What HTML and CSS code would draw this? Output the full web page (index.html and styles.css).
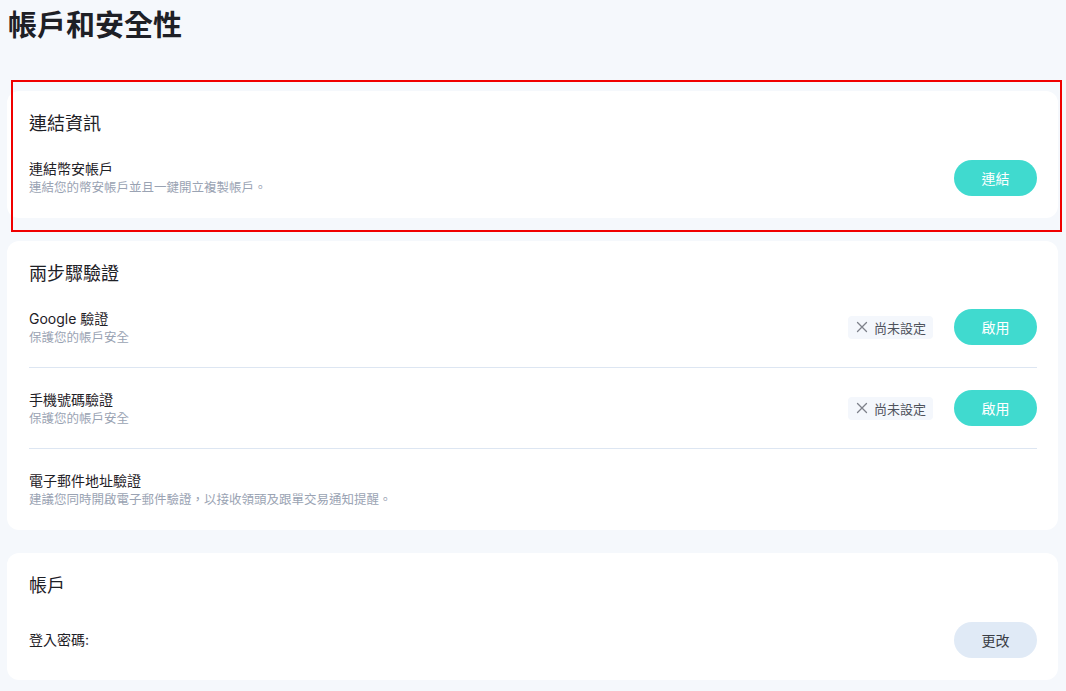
FILE: index.html
```html
<!DOCTYPE html>
<html lang="zh-Hant">
<head>
<meta charset="utf-8">
<title>帳戶和安全性</title>
<link rel="stylesheet" href="styles.css">
</head>
<body>
<div class="page">
  <h1 class="page-title">帳戶和安全性</h1>

  <div class="highlight-wrap">
    <section class="card">
      <h2 class="card-title">連結資訊</h2>
      <div class="row">
        <div class="row-text">
          <div class="row-label">連結幣安帳戶</div>
          <div class="row-desc">連結您的幣安帳戶並且一鍵開立複製帳戶。</div>
        </div>
        <div class="row-actions">
          <button class="btn btn-primary">連結</button>
        </div>
      </div>
    </section>
    <div class="highlight"></div>
  </div>

  <section class="card">
    <h2 class="card-title">兩步驟驗證</h2>
    <div class="row row-divided">
      <div class="row-text">
        <div class="row-label">Google 驗證</div>
        <div class="row-desc">保護您的帳戶安全</div>
      </div>
      <div class="row-actions">
        <span class="tag">
          <svg class="tag-icon" viewBox="0 0 12 12" width="12" height="12"><path d="M1.5 1.5 L10.5 10.5 M10.5 1.5 L1.5 10.5" stroke="#7d818a" stroke-width="1.3" fill="none" stroke-linecap="round"/></svg>
          尚未設定
        </span>
        <button class="btn btn-primary">啟用</button>
      </div>
    </div>
    <div class="row row-divided">
      <div class="row-text">
        <div class="row-label">手機號碼驗證</div>
        <div class="row-desc">保護您的帳戶安全</div>
      </div>
      <div class="row-actions">
        <span class="tag">
          <svg class="tag-icon" viewBox="0 0 12 12" width="12" height="12"><path d="M1.5 1.5 L10.5 10.5 M10.5 1.5 L1.5 10.5" stroke="#7d818a" stroke-width="1.3" fill="none" stroke-linecap="round"/></svg>
          尚未設定
        </span>
        <button class="btn btn-primary">啟用</button>
      </div>
    </div>
    <div class="row">
      <div class="row-text">
        <div class="row-label">電子郵件地址驗證</div>
        <div class="row-desc">建議您同時開啟電子郵件驗證，以接收領頭及跟單交易通知提醒。</div>
      </div>
    </div>
  </section>

  <section class="card">
    <h2 class="card-title">帳戶</h2>
    <div class="row">
      <div class="row-text">
        <div class="row-label">登入密碼:</div>
      </div>
      <div class="row-actions">
        <button class="btn btn-secondary">更改</button>
      </div>
    </div>
  </section>
</div>
</body>
</html>
```

FILE: styles.css
```css
* { box-sizing: border-box; }

html, body {
  margin: 0;
  padding: 0;
  background: #f5f8fc;
  font-family: "Inter", "Noto Sans CJK TC", "Noto Sans", sans-serif;
  color: #1e2026;
}

.page {
  padding: 0 8px 20px 7px;
  display: flex;
  flex-direction: column;
  gap: 23px;
}

.page-title {
  margin: 6px 0 22px 1px;
  font-size: 29px;
  line-height: 40px;
  font-weight: 700;
  color: #1e2026;
}

.highlight-wrap {
  position: relative;
}

.highlight {
  position: absolute;
  left: 4px;
  right: -4px;
  top: -11px;
  bottom: -14px;
  border: 2px solid #f00000;
  pointer-events: none;
}

.card {
  background: #ffffff;
  border-radius: 12px;
  padding: 20px 21px 0 22px;
}

.card-title {
  margin: 0;
  font-size: 18px;
  line-height: 26px;
  font-weight: 400;
  color: #1e2026;
}

.row {
  display: flex;
  align-items: center;
  justify-content: space-between;
  min-height: 81px;
}

.row-divided {
  border-bottom: 1px solid #dde6f2;
}

.row-text {
  display: flex;
  flex-direction: column;
  padding-top: 1px;
}

.row-label {
  font-size: 14px;
  line-height: 20px;
  color: #1e2026;
}

.row-desc {
  font-size: 12.5px;
  line-height: 18px;
  color: #9aa3b3;
}

.row-actions {
  display: flex;
  align-items: center;
  gap: 21px;
}

.tag {
  display: inline-flex;
  align-items: center;
  gap: 6px;
  height: 23px;
  padding: 0 7px 0 8px;
  background: #f4f7fc;
  border-radius: 4px;
  font-size: 13px;
  color: #4f535c;
}

.tag-icon {
  display: block;
}

.btn {
  width: 83px;
  height: 36px;
  border: none;
  border-radius: 18px;
  font-family: inherit;
  font-size: 14px;
  cursor: pointer;
}

.btn-primary {
  background: #40dacf;
  color: #ffffff;
}

.btn-secondary {
  background: #e0eaf6;
  color: #3a3d45;
}
```
